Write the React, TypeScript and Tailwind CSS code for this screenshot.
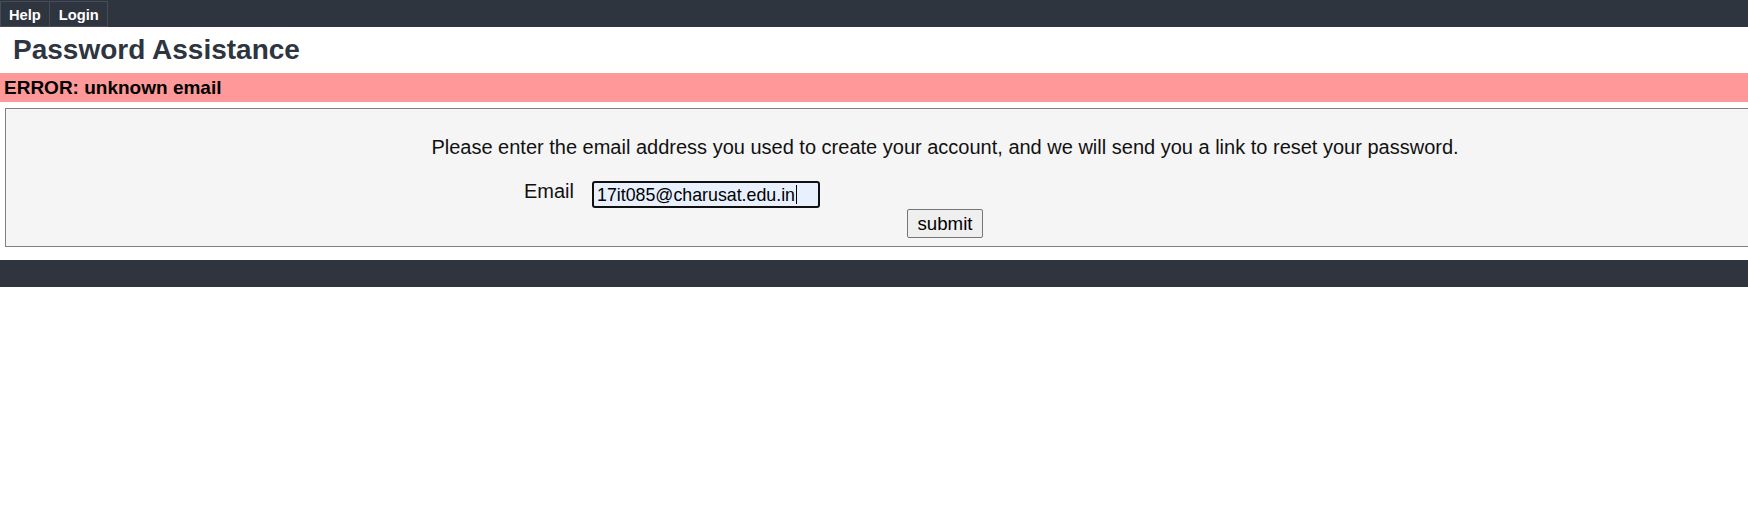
import React from "react";

export default function App() {
  return (
    <div
      className="w-full min-h-[512px] bg-white overflow-hidden"
      style={{ fontFamily: '"Liberation Sans", Arial, sans-serif' }}
    >
      <nav className="h-[27px] bg-[#2e353f] flex items-start">
        <a className="mt-[1px] h-[26px] border border-[#464d58] px-[8px] pt-[5px] leading-[17px] text-[14.7px] font-bold text-white">
          Help
        </a>
        <a className="mt-[1px] h-[26px] border border-l-0 border-[#464d58] px-[8px] pl-[9px] pt-[5px] leading-[17px] text-[14.7px] font-bold text-white">
          Login
        </a>
      </nav>

      <h2 className="pt-[7px] pl-[13px] text-[28px] leading-[32px] font-bold text-[#2e353f]">
        Password Assistance
      </h2>

      <div className="mt-[7px] h-[29px] bg-[#ff9999] pl-[4px] text-[19px] leading-[29px] font-bold text-black">
        ERROR: unknown email
      </div>

      <div className="mt-[6px] ml-[5px] w-[1880px] border border-[#808080] bg-[#f5f5f5] pt-[27px] pb-[8px] text-[#111]">
        <p className="text-center text-[20px] leading-[23px]">
          Please enter the email address you used to create your account, and we will send you a link to reset your password.
        </p>
        <div className="mt-[21px] flex items-start pl-[518px]">
          <span className="text-[20px] leading-[23px]">Email</span>
          <div className="ml-[18px] mt-[1px] flex h-[27px] w-[228px] items-center rounded-[3px] border-2 border-[#101010] bg-[#e8f0fe] pl-[3px] text-[17.8px] leading-[20px] text-black">
            <span>17it085@charusat.edu.in</span>
            <span className="ml-[1px] inline-block h-[19px] w-[1px] bg-black" />
          </div>
        </div>
        <div className="mt-[1px] flex justify-center">
          <button className="h-[29px] w-[76px] rounded-[2px] border border-[#767676] bg-[#efefef] text-[18.7px] leading-[22px] text-black">
            submit
          </button>
        </div>
      </div>

      <div className="mt-[13px] h-[27px] bg-[#2e353f]" />
    </div>
  );
}
